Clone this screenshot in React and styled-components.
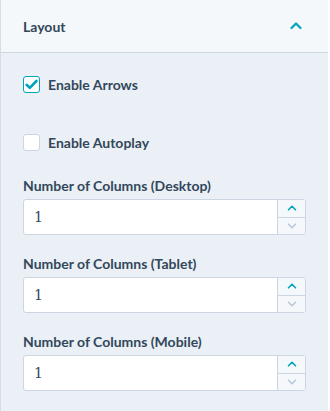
import React, { useState } from 'react';
import styled, { createGlobalStyle } from 'styled-components';

const GlobalStyle = createGlobalStyle`
  html, body {
    margin: 0;
    padding: 0;
    background: #ffffff;
  }
  body {
    font-family: Lato, "Open Sans", sans-serif;
  }
`;

const Panel = styled.section`
  width: 328px;
  height: 411px;
  overflow: hidden;
  box-sizing: border-box;
  border-left: 1px solid #d6dde8;
  background: #eaf0f6;
`;

const Header = styled.div`
  height: 53px;
  box-sizing: border-box;
  padding: 0 22px;
  display: flex;
  align-items: center;
  justify-content: space-between;
  background: #f5f8fa;
  border-bottom: 1px solid #cbd6e2;
`;

const Title = styled.span`
  font-size: 14px;
  font-weight: 700;
  color: #33475b;
`;

const Chevron = styled.svg`
  width: 14px;
  height: 14px;
  margin-right: 3px;
  transform: rotate(${(p) => (p.$down ? '180deg' : '0deg')});
`;

const Body = styled.div`
  padding: 22px 22px 0 22px;
  display: flex;
  flex-direction: column;
`;

const CheckRow = styled.label`
  display: flex;
  align-items: center;
  gap: 8px;
  height: 18px;
  margin-bottom: ${(p) => p.$gap}px;
  cursor: pointer;
`;

const Box = styled.span`
  width: 17px;
  height: 17px;
  box-sizing: border-box;
  border-radius: 3px;
  border: 1px solid ${(p) => (p.$on ? '#00a4bd' : '#cbd6e2')};
  background: #ffffff;
  display: flex;
  align-items: center;
  justify-content: center;
`;

const CheckText = styled.span`
  font-size: 14px;
  font-weight: 700;
  color: #33475b;
`;

const Field = styled.div`
  display: flex;
  flex-direction: column;
  margin-bottom: 20px;
`;

const Label = styled.span`
  font-size: 14px;
  font-weight: 700;
  color: #33475b;
  margin-bottom: 4px;
  line-height: 18px;
`;

const NumberBox = styled.div`
  width: 283px;
  height: 36px;
  box-sizing: border-box;
  display: flex;
  border: 1px solid #cbd6e2;
  border-radius: 3px;
  background: #ffffff;
  overflow: hidden;
`;

const Input = styled.input`
  flex: 1;
  min-width: 0;
  border: none;
  outline: none;
  padding: 0 0 0 10px;
  font-family: "DejaVu Serif", serif;
  font-size: 14px;
  color: #33475b;
  background: transparent;
`;

const Spinner = styled.div`
  width: 27px;
  display: flex;
  flex-direction: column;
  border-left: 1px solid #cbd6e2;
  background: #f5f8fa;
`;

const SpinButton = styled.button`
  flex: 1;
  border: none;
  padding: 0;
  background: transparent;
  display: flex;
  align-items: center;
  justify-content: center;
  cursor: pointer;
  & + & {
    border-top: 1px solid #cbd6e2;
  }
`;

const Arrow = ({ down, color, size = 10 }) => (
  <svg width={size} height={size} viewBox="0 0 10 10" style={{ transform: down ? 'rotate(180deg)' : undefined }}>
    <path d="M1.5 6.8 L5 3.3 L8.5 6.8" fill="none" stroke={color} strokeWidth="1.6" strokeLinecap="round" strokeLinejoin="round" />
  </svg>
);

const Checkbox = ({ label, checked, onToggle, gap }) => (
  <CheckRow $gap={gap} onClick={onToggle}>
    <Box $on={checked}>
      {checked && (
        <svg width="13" height="11" viewBox="0 0 13 11">
          <path d="M1.6 5.8 L4.8 8.8 L11.4 2" fill="none" stroke="#00a4bd" strokeWidth="2.6" strokeLinecap="round" strokeLinejoin="round" />
        </svg>
      )}
    </Box>
    <CheckText>{label}</CheckText>
  </CheckRow>
);

const NumberField = ({ label }) => {
  const [value, setValue] = useState(1);
  return (
    <Field>
      <Label>{label}</Label>
      <NumberBox>
        <Input value={value} onChange={(e) => setValue(e.target.value)} />
        <Spinner>
          <SpinButton onClick={() => setValue(Number(value) + 1)}>
            <Arrow color="#00a4bd" />
          </SpinButton>
          <SpinButton onClick={() => setValue(Math.max(1, Number(value) - 1))}>
            <Arrow down color="#b9c8d8" />
          </SpinButton>
        </Spinner>
      </NumberBox>
    </Field>
  );
};

const App = () => {
  const [arrows, setArrows] = useState(true);
  const [autoplay, setAutoplay] = useState(false);
  const [open, setOpen] = useState(true);

  return (
    <Panel>
      <GlobalStyle />
      <Header onClick={() => setOpen(!open)}>
        <Title>Layout</Title>
        <Chevron $down={!open} viewBox="0 0 14 14">
          <path d="M2.5 9 L7 4.5 L11.5 9" fill="none" stroke="#00a4bd" strokeWidth="2.2" strokeLinecap="round" strokeLinejoin="round" />
        </Chevron>
      </Header>
      {open && (
        <Body>
          <Checkbox label="Enable Arrows" checked={arrows} onToggle={() => setArrows(!arrows)} gap={40} />
          <Checkbox label="Enable Autoplay" checked={autoplay} onToggle={() => setAutoplay(!autoplay)} gap={26} />
          <NumberField label="Number of Columns (Desktop)" />
          <NumberField label="Number of Columns (Tablet)" />
          <NumberField label="Number of Columns (Mobile)" />
        </Body>
      )}
    </Panel>
  );
};

export default App;
